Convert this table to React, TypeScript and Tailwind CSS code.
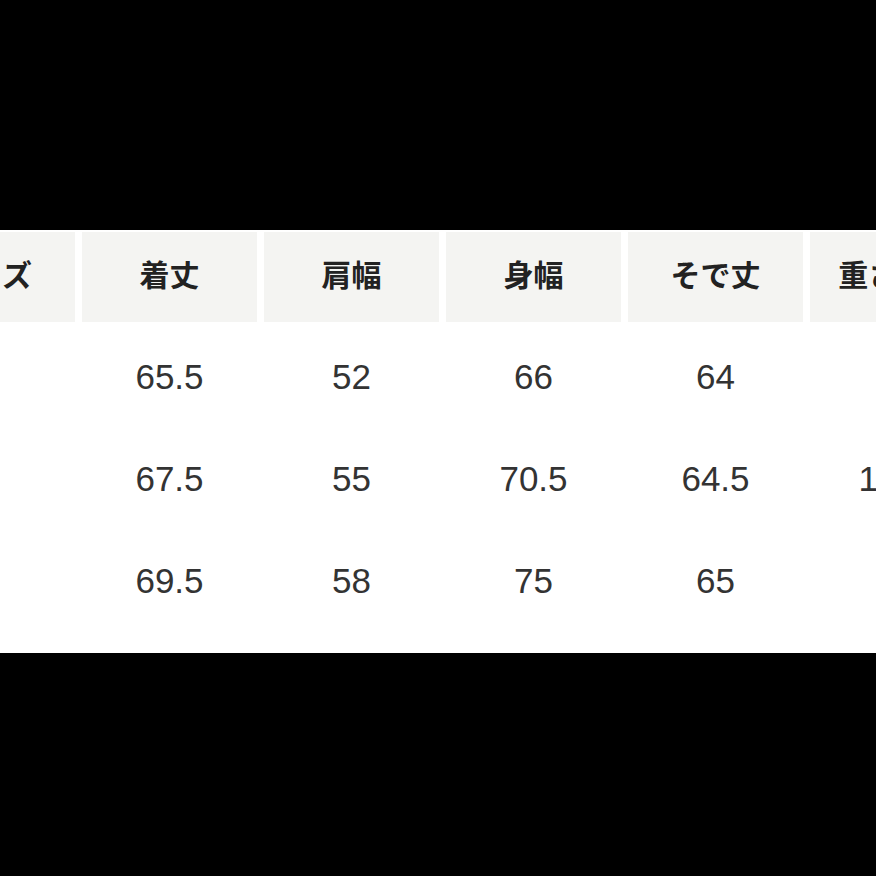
const headers = ["サイズ", "着丈", "肩幅", "身幅", "そで丈", "重さ(kg)"];

const rows = [
  ["S", "65.5", "52", "66", "64", "-"],
  ["M", "67.5", "55", "70.5", "64.5", "1020"],
  ["L", "69.5", "58", "75", "65", "-"],
];

function Row({ cells }: { cells: string[] }) {
  return (
    <div className="flex gap-x-[7px] h-[102px]">
      {cells.map((c, i) => (
        <div
          key={i}
          className="w-[175px] shrink-0 flex items-center justify-center text-[35px] text-[#333]"
          style={{ fontFamily: '"Liberation Sans", Arial, sans-serif' }}
        >
          {c}
        </div>
      ))}
    </div>
  );
}

export default function App() {
  return (
    <div className="w-[876px] h-[876px] bg-black overflow-hidden">
      <div className="h-[230px]" />
      <div className="h-[423px] bg-white overflow-hidden">
        <div className="ml-[-100px] pt-[2px]">
          {/* header */}
          <div className="flex gap-x-[7px]">
            {headers.map((h) => (
              <div
                key={h}
                className="w-[175px] h-[90px] shrink-0 bg-[#f4f4f2] flex items-center justify-center pb-[8px] text-[30px] font-bold text-[#222] whitespace-nowrap"
                style={{ fontFamily: '"Noto Sans CJK JP", sans-serif' }}
              >
                {h}
              </div>
            ))}
          </div>
          <div className="mt-[4px]">
            {rows.map((r, i) => (
              <Row key={i} cells={r} />
            ))}
          </div>
        </div>
      </div>
    </div>
  );
}
